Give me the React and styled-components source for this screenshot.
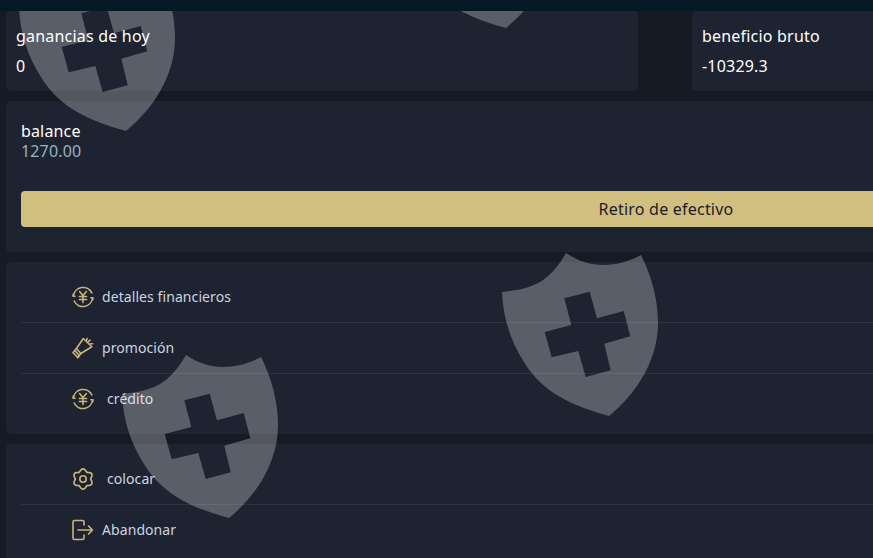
import React from "react";
import styled, { createGlobalStyle } from "styled-components";

const Global = createGlobalStyle`
  html, body { margin: 0; padding: 0; height: 558px; overflow: hidden; background: #161a24; }
  body { font-family: "Noto Sans", "Open Sans", sans-serif; }
`;

const Page = styled.div`
  position: relative;
  width: 1332px;
  height: 558px;
  overflow: hidden;
`;
const TopBar = styled.div`
  position: relative;
  z-index: 2;
  height: 11px;
  background: #051826;
`;
const Content = styled.div`
  display: flex;
  flex-direction: column;
  gap: 10px;
  padding: 0 6px;
`;
const StatRow = styled.div`
  display: flex;
  gap: 54px;
`;
const StatCard = styled.div`
  width: 632px;
  height: 80px;
  box-sizing: border-box;
  padding: 14px 10px;
  background: #1e2331;
  border-radius: 5px;
  color: #fff;
  font-size: 16px;
  letter-spacing: 0.2px;
  line-height: 22px;
  display: flex;
  flex-direction: column;
  gap: 8px;
`;
const BalanceCard = styled.div`
  background: #1e2331;
  border-radius: 5px;
  height: 151px;
  box-sizing: border-box;
  padding: 20px 15px 0;
`;
const BalanceLabel = styled.div`
  color: #fff;
  font-size: 16px;
  letter-spacing: 0.15px;
  line-height: 20px;
`;
const BalanceValue = styled.div`
  color: #9ab0c4;
  font-size: 16px;
  letter-spacing: 0.15px;
  line-height: 20px;
`;
const Withdraw = styled.button`
  display: block;
  width: 100%;
  height: 36px;
  margin-top: 30px;
  border: 0;
  border-radius: 4px;
  background: #d0bf7e;
  color: #1a1d28;
  font: inherit;
  font-size: 16px;
  letter-spacing: 0.22px;
`;
const MenuCard = styled.div`
  background: #1e2331;
  border-radius: 5px;
  padding: 10px 15px;
`;
const Row = styled.div`
  display: flex;
  align-items: center;
  height: 50px;
  padding-left: 51px;
  color: #ccd4e0;
  font-size: 14px;
  letter-spacing: 0.08px;
  & + & { border-top: 1px solid #2e3340; }
`;
const Icon = styled.svg`
  width: 22px;
  height: 22px;
  flex: none;
  fill: none;
  stroke: #c9b677;
  stroke-width: 1.6;
  stroke-linecap: round;
  stroke-linejoin: round;
`;
const Label = styled.span`
  margin-left: ${p => (p.$wide ? 13 : 8)}px;
  padding-bottom: 2px;
`;
const Shield = styled.svg`
  position: absolute;
  z-index: 1;
  left: ${p => p.$x}px;
  top: ${p => p.$y}px;
  width: 160px;
  height: 168px;
  pointer-events: none;
`;

const shieldPath = "M64 1C76 9 88 13 101 13C115 13 128 9 139 3C150 25 156 48 156 71C156 108 135 141 107 164C70 154 40 140 22 110C8 88 1 65 0 40C22 38 36 33 45 25C53 18 59 10 64 1Z M62.3 46.3L87.7 39.7L95 66.3L121.7 59L128.3 84.3L102.3 91.7L108.7 118.3L83.7 125L76.3 99L49.7 105.3L42.7 80L69.3 73Z";

const Mark = ({ x, y }) => (
  <Shield $x={x} $y={y} viewBox="0 0 160 168">
    <path d={shieldPath} fill="#fff" fillOpacity="0.27" fillRule="evenodd" />
  </Shield>
);

const Yen = () => (
  <Icon viewBox="0 0 22 22">
    <path d="M1.4 10A9.7 9.7 0 0 1 19.8 7" />
    <path d="M20.6 12A9.7 9.7 0 0 1 2.2 15" />
    <path d="M1.2 8.2V10.2H3M20.8 13.8V11.8H19" />
    <path d="M7.6 5.5L11 9.5L14.4 5.5M7.4 10.5H14.6M7.4 13.5H14.6M11 9.5V16.5" />
  </Icon>
);
const Horn = () => (
  <Icon viewBox="0 0 22 22">
    <path d="M11.3 1.5L19.8 9.8L8.8 16.5L4.5 11.5Z" />
    <path d="M4.5 11.5L1 15.5L5.8 20.8L8.8 16.5" />
    <path d="M2.8 13.5L7.3 18.6M15.2 1.5L14.4 3.5M18 3.2L16.4 4.6M18.4 6.8H20.6" />
  </Icon>
);
const Gear = () => (
  <Icon viewBox="0 0 22 22">
    <path d="M7.2 4.4Q11 -2.6 14.8 4.4Q22.8 4.2 18.6 11Q22.8 17.8 14.8 17.6Q11 24.6 7.2 17.6Q-0.8 17.8 3.4 11Q-0.8 4.2 7.2 4.4Z" />
    <circle cx="11" cy="11" r="3.2" />
  </Icon>
);
const Exit = () => (
  <Icon viewBox="0 0 22 22">
    <path d="M12 6V3C12 2 11.5 1.5 10.5 1.5H2.5C1.5 1.5 1 2 1 3V19C1 20 1.5 20.5 2.5 20.5H10.5C11.5 20.5 12 20 12 19V16" />
    <path d="M6 11H20.5M16.5 7L20.5 11L16.5 15" />
  </Icon>
);

export default function App() {
  return (
    <Page>
      <Global />
      <TopBar />
      <Content>
        <StatRow>
          <StatCard><span>ganancias de hoy</span><span>0</span></StatCard>
          <StatCard><span>beneficio bruto</span><span>-10329.3</span></StatCard>
        </StatRow>
        <BalanceCard>
          <BalanceLabel>balance</BalanceLabel>
          <BalanceValue>1270.00</BalanceValue>
          <Withdraw>Retiro de efectivo</Withdraw>
        </BalanceCard>
        <MenuCard>
          <Row><Yen /><Label>detalles financieros</Label></Row>
          <Row><Horn /><Label>promoción</Label></Row>
          <Row><Yen /><Label $wide>crédito</Label></Row>
        </MenuCard>
        <MenuCard>
          <Row><Gear /><Label $wide>colocar</Label></Row>
          <Row><Exit /><Label>Abandonar</Label></Row>
        </MenuCard>
      </Content>
      <Mark x={19} y={-33} />
      <Mark x={399} y={-136} />
      <Mark x={502} y={252} />
      <Mark x={122} y={354} />
    </Page>
  );
}
